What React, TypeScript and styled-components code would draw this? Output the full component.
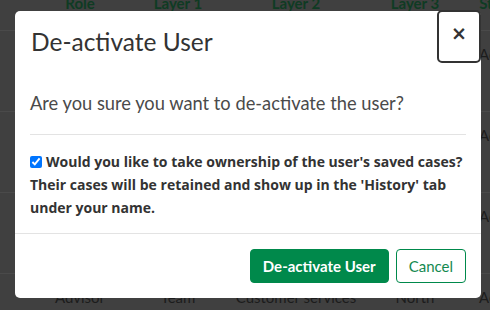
import React from 'react';
import styled, { createGlobalStyle } from 'styled-components';

const GlobalStyle = createGlobalStyle`
  html, body {
    margin: 0;
    padding: 0;
  }
  body {
    font-family: Lato, "Open Sans", sans-serif;
    background: #404040;
  }
`;

const Page = styled.div`
  position: relative;
  width: 490px;
  height: 310px;
  overflow: hidden;
  background: #404040;
`;

const Table = styled.div`
  margin-top: -6px;
  width: 540px;
`;

const Row = styled.div<{ $head?: boolean }>`
  display: grid;
  grid-template-columns: 98px 98px 138px 100px 70px;
  padding-left: 31px;
  height: ${({ $head }) => ($head ? '37px' : '81px')};
  padding-top: ${({ $head }) => ($head ? '0' : '14px')};
  box-sizing: border-box;
  border-bottom: 1px solid #4a4a4a;
  font-size: 15px;
  line-height: 18px;
  font-weight: ${({ $head }) => ($head ? 700 : 400)};
  color: ${({ $head }) => ($head ? '#0f3b23' : '#1c1c1c')};
`;

const Cell = styled.div`
  text-align: center;
  white-space: nowrap;
`;

const Backdrop = styled.div`
  position: absolute;
  inset: 0;
  padding: 11px 0 0 15px;
`;

const Dialog = styled.div`
  width: 466px;
  height: 287px;
  background: #fff;
  border-radius: 5px;
  display: flex;
  flex-direction: column;
  color: #333;
`;

const Header = styled.div`
  display: flex;
  align-items: flex-start;
  padding-left: 16px;
  height: 52px;
`;

const Title = styled.h5`
  margin: 0;
  padding-top: 17px;
  font-size: 24.5px;
  line-height: 28px;
  font-weight: 400;
  color: #333;
`;

const CloseButton = styled.button`
  margin: -1px 0 0 auto;
  width: 44px;
  height: 53px;
  border: 2px solid #333;
  border-radius: 5px;
  background: #fff;
  padding: 0 0 8px;
  font-family: "DejaVu Sans", sans-serif;
  font-size: 19px;
  font-weight: 700;
  color: #333;
  cursor: pointer;
`;

const Body = styled.div`
  padding: 28px 15px 0;
  flex: 1;
`;

const Question = styled.p`
  margin: 0;
  font-size: 18.3px;
  line-height: 24px;
  color: #4a4a4a;
`;

const Divider = styled.hr`
  margin: 19px 0 15px;
  border: 0;
  border-top: 1px solid #e3e3e3;
`;

const Option = styled.label`
  display: block;
  font-family: "Open Sans", Roboto, sans-serif;
  font-size: 14px;
  line-height: 23px;
  font-weight: 700;
  color: #333;
`;

const Check = styled.input`
  width: 12px;
  height: 12px;
  margin: 0 4px 0 0;
  vertical-align: -1px;
  accent-color: #0075ff;
`;

const Footer = styled.div`
  display: flex;
  justify-content: flex-end;
  gap: 7px;
  padding: 15px;
  border-top: 1px solid #e3e3e3;
`;

const Button = styled.button<{ $outline?: boolean }>`
  height: 34px;
  padding: 0 12px;
  border-radius: 4px;
  font-family: Lato, "Open Sans", sans-serif;
  font-size: 15px;
  font-weight: ${({ $outline }) => ($outline ? 400 : 700)};
  border: 1px solid #00894b;
  background: ${({ $outline }) => ($outline ? '#fff' : '#00894b')};
  color: ${({ $outline }) => ($outline ? '#14894f' : '#fff')};
  cursor: pointer;
`;

const rows = [
  ['Manager', 'Team', 'Sales', 'South', 'Active'],
  ['Advisor', 'Team', 'Support', 'East', 'Active'],
  ['Advisor', 'Team', 'Claims', 'West', 'Active'],
  ['Advisor', 'Team', 'Customer services', 'North', 'Active'],
];

export default function App() {
  return (
    <Page>
      <GlobalStyle />
      <Table>
        <Row $head>
          {['Role', 'Layer 1', 'Layer 2', 'Layer 3', 'Status'].map((h) => (
            <Cell key={h}>{h}</Cell>
          ))}
        </Row>
        {rows.map((r, i) => (
          <Row key={i}>
            {r.map((c, j) => (
              <Cell key={j}>{c}</Cell>
            ))}
          </Row>
        ))}
      </Table>
      <Backdrop>
        <Dialog role="dialog">
          <Header>
            <Title>De-activate User</Title>
            <CloseButton aria-label="Close">×</CloseButton>
          </Header>
          <Body>
            <Question>Are you sure you want to de-activate the user?</Question>
            <Divider />
            <Option>
              <Check type="checkbox" defaultChecked />
              Would you like to take ownership of the user's saved cases? Their cases will be
              retained and show up in the 'History' tab under your name.
            </Option>
          </Body>
          <Footer>
            <Button>De-activate User</Button>
            <Button $outline>Cancel</Button>
          </Footer>
        </Dialog>
      </Backdrop>
    </Page>
  );
}
